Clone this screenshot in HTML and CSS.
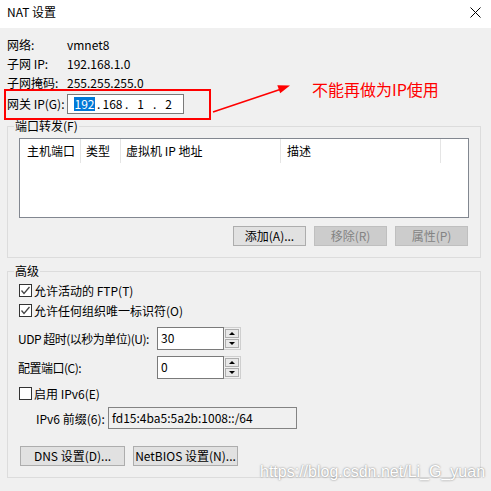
FILE: index.html
```html
<!DOCTYPE html>
<html lang="zh-CN">
<head>
<meta charset="utf-8">
<title>NAT 设置</title>
<link rel="stylesheet" href="styles.css">
</head>
<body>
<div class="titlebar">
  <span class="title">NAT 设置</span>
  <svg class="close" width="11" height="11" viewBox="0 0 11 11"><path d="M0.5 0.5L10.5 10.5M10.5 0.5L0.5 10.5" stroke="#000" stroke-width="1" fill="none"/></svg>
</div>
<div class="body">
  <div class="info">
    <div class="info-row"><span class="info-label">网络:</span><span>vmnet8</span></div>
    <div class="info-row"><span class="info-label">子网 IP:</span><span>192.168.1.0</span></div>
    <div class="info-row"><span class="info-label">子网掩码:</span><span>255.255.255.0</span></div>
    <div class="info-row gw"><span class="info-label">网关 IP(G):</span>
      <div class="ipfield">
        <span class="oct"><span class="sel">192</span></span><span class="dot">.</span><span class="oct">168</span><span class="dot">.</span><span class="oct">1</span><span class="dot">.</span><span class="oct">2</span>
      </div>
    </div>
  </div>

  <fieldset class="group ports">
    <legend>端口转发(F)</legend>
    <div class="listbox">
      <div class="list-head">
        <div class="col c1">主机端口</div>
        <div class="col c2">类型</div>
        <div class="col c3">虚拟机 IP 地址</div>
        <div class="col c4">描述</div>
      </div>
    </div>
    <div class="btn-row right">
      <button class="btn">添加(A)...</button>
      <button class="btn" disabled>移除(R)</button>
      <button class="btn" disabled>属性(P)</button>
    </div>
  </fieldset>

  <fieldset class="group adv">
    <legend>高级</legend>
    <div class="check-row">
      <span class="cb"><svg width="11" height="11" viewBox="0 0 11 11"><path d="M1.5 5.5L4 8.5L9.5 2" stroke="#444" stroke-width="1.3" fill="none"/></svg></span>
      <span>允许活动的 FTP(T)</span>
    </div>
    <div class="check-row">
      <span class="cb"><svg width="11" height="11" viewBox="0 0 11 11"><path d="M1.5 5.5L4 8.5L9.5 2" stroke="#444" stroke-width="1.3" fill="none"/></svg></span>
      <span>允许任何组织唯一标识符(O)</span>
    </div>
    <div class="spin-row">
      <span class="spin-label">UDP 超时(以秒为单位)(U):</span>
      <div class="spin-input">30</div>
      <div class="spin-btns"><span class="sb"><span class="tri-up"></span></span><span class="sb"><span class="tri-down"></span></span></div>
    </div>
    <div class="spin-row">
      <span class="spin-label">配置端口(C):</span>
      <div class="spin-input">0</div>
      <div class="spin-btns"><span class="sb"><span class="tri-up"></span></span><span class="sb"><span class="tri-down"></span></span></div>
    </div>
    <div class="check-row ipv6">
      <span class="cb"></span>
      <span>启用 IPv6(E)</span>
    </div>
    <div class="prefix-row">
      <span class="prefix-label">IPv6 前缀(6):</span>
      <div class="prefix-field">fd15:4ba5:5a2b:1008::/64</div>
    </div>
    <div class="btn-row left">
      <button class="btn wide">DNS 设置(D)...</button>
      <button class="btn wide">NetBIOS 设置(N)...</button>
    </div>
  </fieldset>
</div>

<div class="annot-box"></div>
<svg class="annot-arrow" width="491" height="491" viewBox="0 0 491 491">
  <line x1="213" y1="112" x2="280" y2="89.5" stroke="#f00" stroke-width="1.6"/>
  <polygon points="290,85.5 277.3,85.2 280.2,93.2" fill="#f00"/>
</svg>
<div class="annot-text">不能再做为IP使用</div>
<div class="watermark">https://blog.csdn.net/Li_G_yuan</div>
</body>
</html>
```

FILE: styles.css
```css
* { box-sizing: border-box; }
html, body { margin: 0; padding: 0; }
body {
  width: 491px;
  height: 491px;
  overflow: hidden;
  position: relative;
  background: #f0f0f0;
  font-family: "Noto Sans CJK SC", sans-serif;
  font-size: 12px;
  color: #000;
}

.titlebar {
  height: 28px;
  background: #fff;
  display: flex;
  justify-content: space-between;
  align-items: flex-start;
  padding: 4px 10px 0 7px;
}
.title { line-height: 16px; }
.close { margin-top: 3px; }

.body { padding: 7px 10px 0 7px; }

.info-row {
  display: flex;
  align-items: center;
  height: 19px;
  line-height: 16px;
}
.info-label { width: 60px; flex: none; white-space: nowrap; }
.info-row.gw { height: 20px; margin-top: 2px; }

.ipfield {
  width: 117px;
  flex: none;
  height: 20px;
  background: #fff;
  border: 1px solid #7a7a7a;
  display: flex;
  align-items: center;
  padding-left: 4px;
  line-height: 14px;
}
.oct { width: 25px; text-align: center; }
.dot { width: 3px; text-align: center; }
.sel { background: #0078d7; color: #fff; display: inline-block; padding: 0 1px; }

.group {
  margin: 4px 0 0;
  border: 1px solid #dcdcdc;
  padding: 4px 11px 11px;
  min-width: 0;
}
.group legend {
  padding: 0 1px;
  margin-left: -5px;
  line-height: 16px;
}
.group.adv { margin-top: 5px; padding-top: 1px; }

.listbox {
  height: 80px;
  border: 1px solid #828790;
  background: #fff;
}
.list-head { display: flex; height: 24px; }
.col {
  border-right: 1px solid #e5e5e5;
  line-height: 24px;
  white-space: nowrap;
}
.c1 { width: 61px; padding-left: 7px; }
.c2 { width: 40px; padding-left: 5px; }
.c3 { width: 160px; padding-left: 5px; }
.c4 { width: 160px; padding-left: 6px; }

.btn-row { display: flex; gap: 8px; margin-top: 8px; }
.btn-row.right { justify-content: flex-end; padding-right: 1px; }
.btn-row.left { margin-top: 17px; padding-left: 1px; }
.btn {
  width: 73px;
  height: 20px;
  padding: 0;
  font: inherit;
  line-height: 18px;
  color: #000;
  background: #e1e1e1;
  border: 1px solid #adadad;
  white-space: nowrap;
}
.btn:disabled { background: #cccccc; border-color: #bfbfbf; color: #838383; }
.btn.wide { width: 105px; }

.check-row {
  display: flex;
  align-items: center;
  height: 20px;
  white-space: nowrap;
}
.cb {
  width: 13px;
  height: 13px;
  flex: none;
  border: 1px solid #333;
  background: #fff;
  margin-right: 2px;
  display: flex;
}
.check-row.ipv6 { height: 18px; margin-top: 5px; }

.spin-row {
  display: flex;
  align-items: center;
  height: 23px;
  margin-top: 7px;
}
.spin-row + .spin-row { margin-top: 6px; }
.spin-label {
  width: 138px;
  flex: none;
  margin-left: -1px;
  margin-right: 1px;
  white-space: nowrap;
  letter-spacing: -0.5px;
}
.spin-input {
  width: 67px;
  flex: none;
  height: 23px;
  background: #fff;
  border: 1px solid #7a7a7a;
  padding-left: 3px;
  line-height: 19px;
}
.spin-btns {
  width: 17px;
  flex: none;
  height: 23px;
  border: 1px solid #cfcfcf;
  border-left: none;
  display: flex;
  flex-direction: column;
  padding: 1px;
  gap: 1px;
  background: #f0f0f0;
}
.sb {
  flex: 1;
  border: 1px solid #adadad;
  background: #e8e8e8;
  display: flex;
  align-items: center;
  justify-content: center;
}
.tri-up {
  width: 0; height: 0;
  border-left: 3px solid transparent;
  border-right: 3px solid transparent;
  border-bottom: 3px solid #000;
}
.tri-down {
  width: 0; height: 0;
  border-left: 3px solid transparent;
  border-right: 3px solid transparent;
  border-top: 3px solid #000;
}

.prefix-row {
  display: flex;
  align-items: center;
  margin-top: 5px;
  padding-left: 17px;
}
.prefix-label { width: 72px; flex: none; white-space: nowrap; }
.prefix-field {
  width: 189px;
  flex: none;
  height: 22px;
  border: 1px solid #838383;
  background: #f0f0f0;
  padding-left: 3px;
  line-height: 20px;
}

/* annotation overlays */
.annot-box {
  position: absolute;
  left: 4px;
  top: 89px;
  width: 207px;
  height: 31px;
  border: 2px solid #f00;
}
.annot-arrow {
  position: absolute;
  left: 0;
  top: 0;
  pointer-events: none;
}
.annot-text {
  position: absolute;
  left: 312px;
  top: 80px;
  font-size: 16px;
  line-height: 18px;
  color: #f00;
  white-space: nowrap;
}
.watermark {
  position: absolute;
  left: 260px;
  top: 463px;
  font-family: "Liberation Sans", sans-serif;
  font-size: 16px;
  line-height: 18px;
  color: #fff;
  text-shadow: 0 0 2px rgba(0,0,0,0.55);
  white-space: nowrap;
}
```
